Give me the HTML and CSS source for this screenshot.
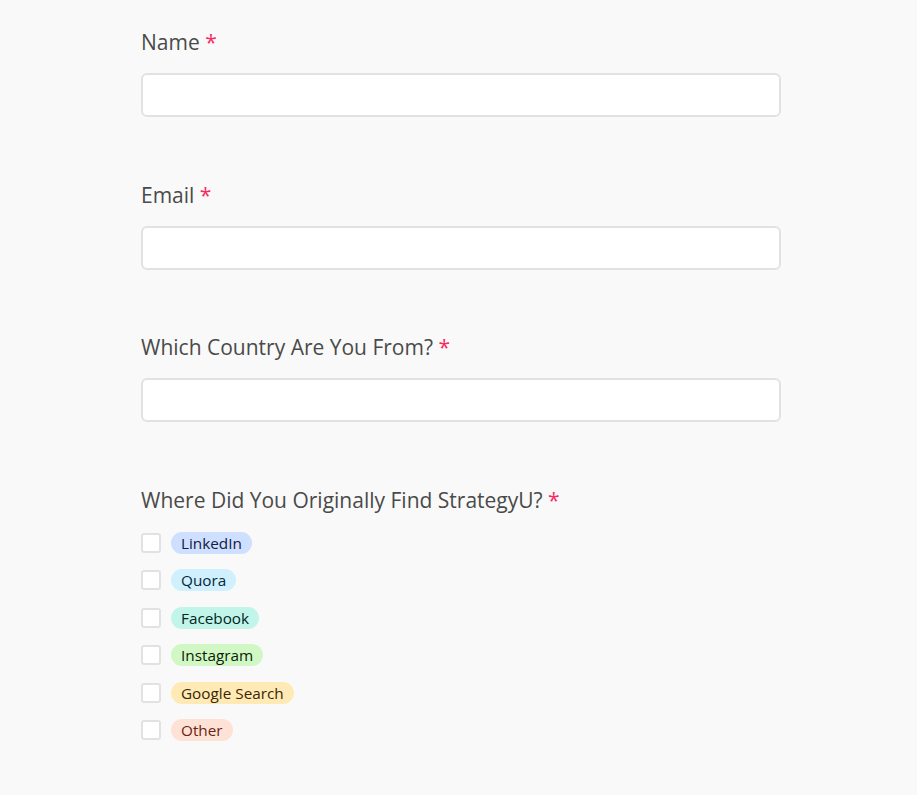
FILE: index.html
```html
<!DOCTYPE html>
<html>
<head>
<meta charset="utf-8">
<link rel="stylesheet" href="styles.css">
</head>
<body>
<form class="form">
  <div class="field">
    <div class="label">Name <span class="req">*</span></div>
    <input class="input" type="text">
  </div>
  <div class="field">
    <div class="label">Email <span class="req">*</span></div>
    <input class="input" type="text">
  </div>
  <div class="field">
    <div class="label">Which Country Are You From? <span class="req">*</span></div>
    <input class="input" type="text">
  </div>
  <div class="field">
    <div class="label">Where Did You Originally Find StrategyU? <span class="req">*</span></div>
    <div class="options">
      <label class="option"><span class="box"></span><span class="pill blue">LinkedIn</span></label>
      <label class="option"><span class="box"></span><span class="pill cyan">Quora</span></label>
      <label class="option"><span class="box"></span><span class="pill teal">Facebook</span></label>
      <label class="option"><span class="box"></span><span class="pill green">Instagram</span></label>
      <label class="option"><span class="box"></span><span class="pill yellow">Google Search</span></label>
      <label class="option"><span class="box"></span><span class="pill orange">Other</span></label>
    </div>
  </div>
</form>
</body>
</html>
```
FILE: styles.css
```css
html, body {
  margin: 0;
  padding: 0;
  background: #f9f9f9;
}
body {
  font-family: "Open Sans", "Noto Sans", sans-serif;
  color: #4d4d4d;
}
.form {
  width: 640px;
  margin: 0 auto;
  padding: 28px 0 0 5px;
  display: flex;
  flex-direction: column;
  gap: 63.5px;
}
.field {
  display: flex;
  flex-direction: column;
}
.label {
  font-size: 21px;
  line-height: 28px;
  margin-bottom: 17px;
  color: #4a4a4a;
}
.req {
  color: #f82b60;
}
.input {
  box-sizing: border-box;
  width: 640px;
  height: 44px;
  margin: 0;
  border: 2px solid #e2e2e2;
  border-radius: 6px;
  background: #fff;
  outline: none;
}
.options {
  display: flex;
  flex-direction: column;
  gap: 15.6px;
  margin-top: 1px;
}
.option {
  display: flex;
  align-items: center;
  gap: 10px;
  height: 22px;
}
.box {
  box-sizing: border-box;
  width: 20px;
  height: 20px;
  border: 2px solid #e2e2e2;
  border-radius: 3px;
  background: #fff;
}
.pill {
  font-size: 15.3px;
  line-height: 22px;
  padding: 0 10px;
  border-radius: 11px;
}
.blue { background: #cfdfff; color: #102046; }
.cyan { background: #d0f0fd; color: #04283f; }
.teal { background: #c2f5e9; color: #012524; }
.green { background: #d1f7c4; color: #0b1d05; }
.yellow { background: #ffeab6; color: #3b2501; }
.orange { background: #fee2d5; color: #6b2613; }
```
